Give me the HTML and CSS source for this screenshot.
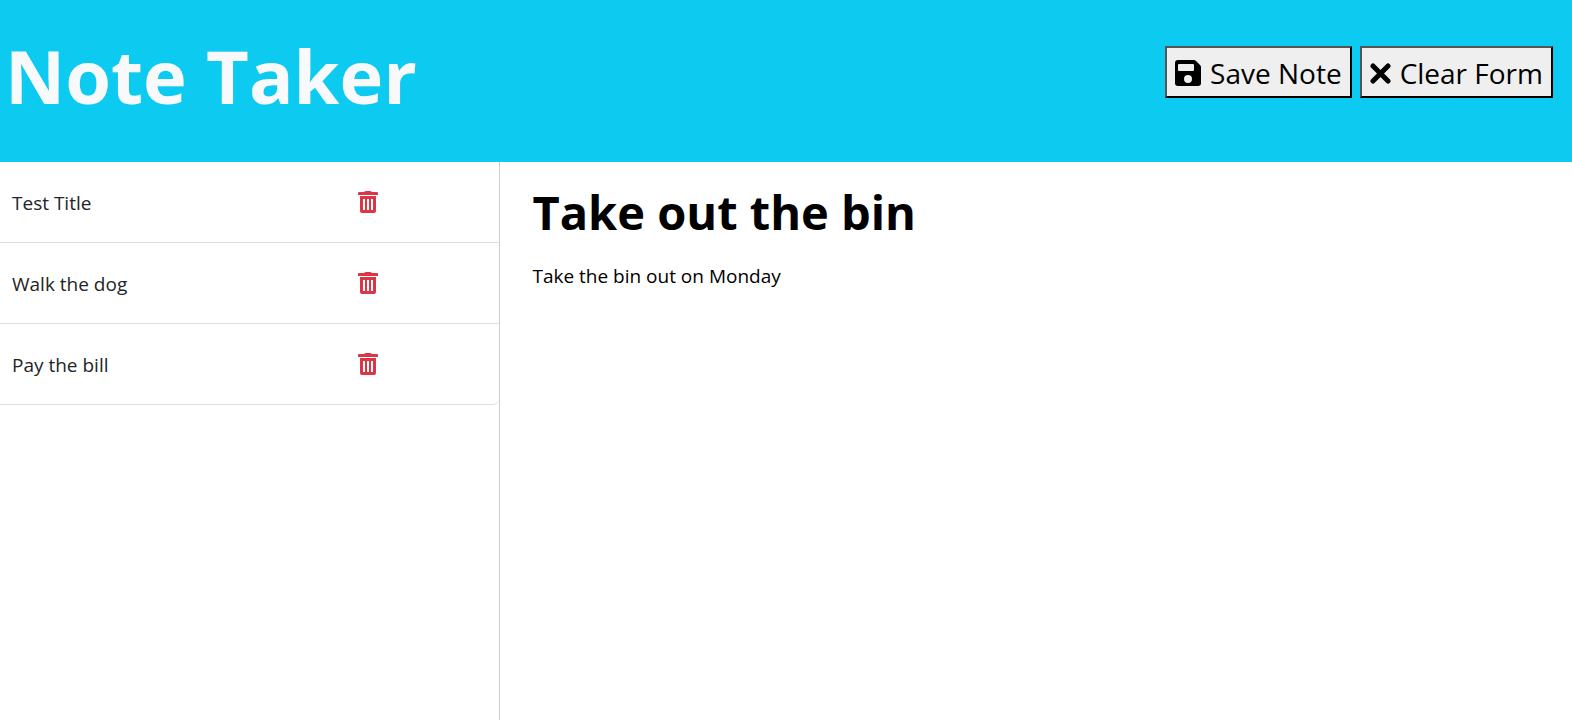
FILE: index.html
```html
<!DOCTYPE html>
<html lang="en">
<head>
<meta charset="utf-8">
<meta name="viewport" content="width=device-width, initial-scale=1">
<title>Note Taker</title>
<link rel="stylesheet" href="styles.css">
</head>
<body>
<header class="navbar">
  <h1 class="brand">Note Taker</h1>
  <div class="actions">
    <button class="action" type="button"><svg class="icon-save" viewBox="0 0 26 26" aria-hidden="true"><path fill-rule="evenodd" d="M3 0H19Q20 0 21 1L25 5Q26 6 26 7V23Q26 26 23 26H3Q0 26 0 23V3Q0 0 3 0ZM4 4Q3 4 3 5V10Q3 11 4 11H18Q19 11 19 10V5Q19 4 18 4ZM13 15A4 4 0 1 0 13 23A4 4 0 1 0 13 15Z"/></svg>Save Note</button>
    <button class="action" type="button"><svg class="icon-close" viewBox="0 0 21 21" aria-hidden="true"><path d="M3 3L18 18M18 3L3 18"/></svg>Clear Form</button>
  </div>
</header>
<main class="layout">
  <aside class="sidebar">
    <ul class="notes">
      <li class="note"><a class="note-title" href="#test">Test Title</a><button class="delete" type="button" aria-label="Delete Test Title"><svg class="icon-trash" viewBox="0 0 20 22" aria-hidden="true"><path fill-rule="evenodd" d="M1 1H6Q7 0 8 0H12Q13 0 14 1H19Q20 1 20 2V4H0V2Q0 1 1 1ZM2 5H18V20Q18 22 16 22H4Q2 22 2 20ZM5 8V19H7V8ZM9 8V19H11V8ZM13 8V19H15V8Z"/></svg></button></li>
      <li class="note"><a class="note-title" href="#walk">Walk the dog</a><button class="delete" type="button" aria-label="Delete Walk the dog"><svg class="icon-trash" viewBox="0 0 20 22" aria-hidden="true"><path fill-rule="evenodd" d="M1 1H6Q7 0 8 0H12Q13 0 14 1H19Q20 1 20 2V4H0V2Q0 1 1 1ZM2 5H18V20Q18 22 16 22H4Q2 22 2 20ZM5 8V19H7V8ZM9 8V19H11V8ZM13 8V19H15V8Z"/></svg></button></li>
      <li class="note"><a class="note-title" href="#pay">Pay the bill</a><button class="delete" type="button" aria-label="Delete Pay the bill"><svg class="icon-trash" viewBox="0 0 20 22" aria-hidden="true"><path fill-rule="evenodd" d="M1 1H6Q7 0 8 0H12Q13 0 14 1H19Q20 1 20 2V4H0V2Q0 1 1 1ZM2 5H18V20Q18 22 16 22H4Q2 22 2 20ZM5 8V19H7V8ZM9 8V19H11V8ZM13 8V19H15V8Z"/></svg></button></li>
    </ul>
  </aside>
  <section class="editor">
    <input class="editor-title" type="text" aria-label="Note title" value="Take out the bin">
    <textarea class="editor-text" aria-label="Note text">Take the bin out on Monday</textarea>
  </section>
</main>
</body>
</html>
```
FILE: styles.css
```css
* { box-sizing: border-box; }

body {
  display: flex;
  flex-direction: column;
  min-height: 100vh;
  margin: 0;
  color: #212529;
  background: #fff;
  font: 19px/32px "Segoe UI", "Open Sans", "Noto Sans", sans-serif;
}

.navbar {
  display: flex;
  align-items: flex-start;
  justify-content: space-between;
  padding: 28px 19px 38px 5px;
  background: #0dcaf0;
}

.brand {
  margin: 0;
  color: #f8f9fa;
  font-size: 74px;
  font-weight: 700;
  line-height: 96px;
}

.actions {
  display: flex;
  gap: 8px;
  margin-top: 18px;
}

.action {
  display: flex;
  align-items: center;
  gap: 9px;
  height: 52px;
  padding: 2px 8px 0;
  border: 2px outset #000;
  background: #efefef;
  color: #000;
  font: inherit;
  font-size: 28px;
}

.icon-save { width: 26px; height: 26px; }

.icon-close {
  width: 21px;
  height: 21px;
  stroke: #000;
  stroke-width: 5;
  stroke-linecap: round;
}

.layout {
  display: grid;
  flex: 1;
  grid-template-columns: minmax(0, 467fr) minmax(0, 1000fr);
}

.sidebar { border-right: 1px solid #ccc; }

.notes {
  margin: 0;
  padding: 0;
  list-style: none;
}

.note {
  display: grid;
  grid-template-columns: 71% auto;
  align-items: center;
  justify-content: start;
  height: 81px;
  padding-left: 12px;
  border-bottom: 1px solid #dedede;
}

.note:last-child { border-bottom-right-radius: 6px; }

.note-title { padding-top: 2px; color: inherit; text-decoration: none; }

.delete {
  display: flex;
  padding: 0;
  border: 0;
  background: none;
}

.icon-trash { width: 20px; height: 22px; fill: #dc3545; }

.editor {
  display: flex;
  flex-direction: column;
  gap: 16px;
  padding: 18px 32px;
}

.editor-title,
.editor-text {
  width: 100%;
  padding: 0;
  border: 0;
  outline: 0;
  background: none;
  color: #000;
  font: inherit;
}

.editor-title {
  height: 64px;
  font-size: 47px;
  font-weight: 700;
}

.editor-text { flex: 1; resize: none; }
```
